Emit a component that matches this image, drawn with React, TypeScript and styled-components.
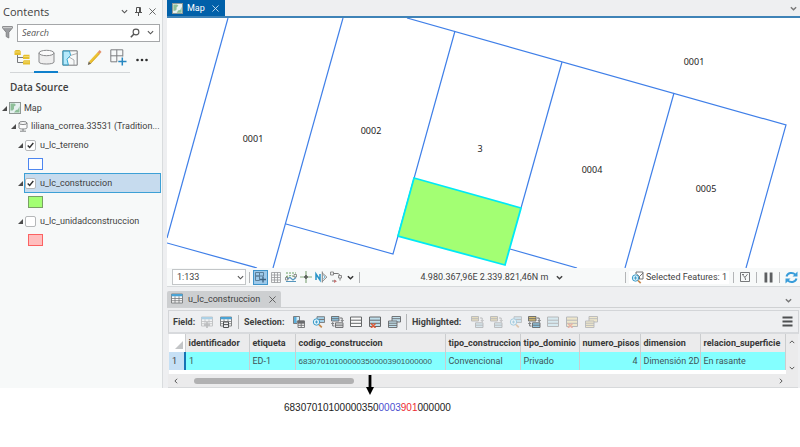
import React from "react";
import styled, { createGlobalStyle, css } from "styled-components";

const GlobalStyle = createGlobalStyle`
  *, *::before, *::after { box-sizing: border-box; }
  body {
    margin: 0;
    background: #ffffff;
    color: #3f3f3f;
    font-family: Roboto, "Noto Sans", sans-serif;
    font-size: 9px;
    line-height: 12px;
  }
  button, input, select { font: inherit; color: inherit; margin: 0; }
  svg { display: block; flex: none; }
`;

/* ---------- layout ---------- */

const Page = styled.div`
  display: flex;
  flex-direction: column;
  min-height: 100vh;
  background: #ffffff;
`;

const Workspace = styled.div`
  display: grid;
  grid-template-columns: 163px minmax(0, 1fr);
  column-gap: 4px;
  background: #eeeff1;
`;

const Sidebar = styled.aside`
  display: flex;
  flex-direction: column;
  min-width: 0;
  background: #f7f9f9;
  border-right: 1px solid #d9dcde;
`;

const Main = styled.main`
  display: flex;
  flex-direction: column;
  min-width: 0;
`;

const IconButton = styled.button<{ $w?: number; $h?: number; $faded?: boolean; $active?: boolean }>`
  display: flex;
  flex: none;
  align-items: center;
  justify-content: center;
  width: ${(p) => p.$w ?? 14}px;
  height: ${(p) => p.$h ?? 14}px;
  padding: 0;
  border: 1px solid ${(p) => (p.$active ? "#3f93c9" : "transparent")};
  background: ${(p) => (p.$active ? "#9cc9ea" : "transparent")};
  opacity: ${(p) => (p.$faded ? 0.4 : 1)};
`;

/* ---------- contents pane ---------- */

const PaneHeader = styled.header`
  display: flex;
  align-items: center;
  height: 23px;
  padding: 0 3px 0 3px;
`;

const PaneTitle = styled.h2`
  flex: 1;
  margin: 0;
  font-family: "Open Sans", "Noto Sans", sans-serif;
  font-size: 11px;
  font-weight: 400;
`;

const SearchRow = styled.div`
  display: flex;
  align-items: center;
  gap: 3px;
  height: 19px;
  padding: 0 2px 0 1px;
`;

const SearchBox = styled.div`
  display: flex;
  flex: 1;
  align-items: center;
  min-width: 0;
  height: 18px;
  padding-left: 4px;
  background: #ffffff;
  border: 1px solid #a5a7a9;
`;

const SearchInput = styled.input`
  flex: 1;
  min-width: 0;
  padding: 0;
  border: 0;
  outline: 0;
  background: transparent;
  font-family: "Open Sans", "Noto Sans", sans-serif;
  &::placeholder { color: #555; font-style: italic; opacity: 1; }
`;

const ViewTabs = styled.nav`
  display: flex;
  align-items: stretch;
  height: 31px;
  padding-left: 10px;
`;

const ViewTab = styled.button<{ $active?: boolean; $line?: boolean }>`
  display: flex;
  align-items: center;
  justify-content: center;
  width: 24px;
  padding: 0;
  border: 0;
  background: transparent;
  box-shadow: inset 0 ${(p) => (p.$active ? "-2px #0f80cc" : p.$line === false ? "0 transparent" : "-1px #d3d6d8")};
`;

const MoreTab = styled(ViewTab)`
  padding-top: 4px;
`;

const SectionTitle = styled.h3`
  margin: 0;
  padding: 7px 0 4px 10px;
  font-family: "Open Sans", "Noto Sans", sans-serif;
  font-size: 10px;
  font-weight: 600;
  line-height: 15px;
`;

const Tree = styled.ul`
  margin: 0;
  padding: 0 1px 0 0;
  list-style: none;
`;

const TreeRow = styled.li<{ $level: number; $tall?: boolean }>`
  display: flex;
  align-items: center;
  height: ${(p) => (p.$tall ? 20 : 18)}px;
  padding-left: ${(p) => p.$level * 8}px;
  white-space: nowrap;
`;

const TreeName = styled.span`
  padding-left: 3px;
`;

const LayerLabel = styled.label<{ $selected?: boolean }>`
  display: flex;
  flex: 1;
  align-items: center;
  height: 20px;
  gap: 4px;
  border: 1px solid transparent;
  ${(p) =>
    p.$selected &&
    css`
      border-color: #3da0d6;
      background: #c6dbee;
    `}
`;

const CheckWrap = styled.span`
  display: grid;
  flex: none;
  & > * { grid-area: 1 / 1; place-self: center; }
  & > svg { visibility: hidden; pointer-events: none; }
  & > input:checked + svg { visibility: visible; }
`;

const CheckInput = styled.input`
  appearance: none;
  width: 11px;
  height: 11px;
  border: 1px solid #b5b7b9;
  border-radius: 2px;
  background: #ffffff;
`;

const Swatch = styled.span<{ $fill: string; $stroke: string }>`
  width: 15px;
  height: 12px;
  margin-left: 4px;
  background: ${(p) => p.$fill};
  border: 1px solid ${(p) => p.$stroke};
`;

/* ---------- map pane ---------- */

const MapTabs = styled.div`
  display: flex;
  align-items: stretch;
  justify-content: space-between;
  height: 18px;
  padding-right: 2px;
  border-bottom: 2px solid #3f83b7;
`;

const MapTab = styled.div`
  display: flex;
  align-items: center;
  gap: 4px;
  padding: 0 2px 0 5px;
  background: #0060a9;
  color: #ffffff;
`;

const MapCanvas = styled.svg`
  width: 100%;
  height: 250px;
  background: #ffffff;
  font-family: "Noto Sans", sans-serif;
  font-size: 9px;
  fill: #1d1d1d;
`;

const StatusBar = styled.div`
  display: flex;
  align-items: center;
  height: 19px;
  padding: 0 2px 0 5px;
  background: #f7f9f9;
  border-bottom: 1px solid #d7dadc;
`;

const ScaleBox = styled.div`
  display: grid;
  align-items: center;
  width: 74px;
  background: #ffffff;
  & > * { grid-area: 1 / 1; }
  & > svg { justify-self: end; margin-right: 2px; pointer-events: none; }
`;

const ScaleSelect = styled.select`
  appearance: none;
  width: 100%;
  height: 16px;
  padding: 0 4px;
  border: 1px solid #c3c6c8;
  border-radius: 0;
  background: transparent;
`;

const Divider = styled.span<{ $gap?: number; $h?: number }>`
  flex: none;
  width: 1px;
  height: ${(p) => p.$h ?? 11}px;
  margin: 0 ${(p) => p.$gap ?? 4}px;
  background: #b3b5b7;
`;

const Tools = styled.div`
  display: flex;
  align-items: center;
  gap: 1px;
`;

const Coordinates = styled.div`
  display: flex;
  flex: 1;
  align-items: center;
  justify-content: center;
  gap: 8px;
  white-space: nowrap;
`;

const Selected = styled.div`
  display: flex;
  align-items: center;
  gap: 2px;
  padding: 0 2px;
  background: #ffffff;
  white-space: nowrap;
`;

/* ---------- table pane ---------- */

const TableTabs = styled.div`
  display: flex;
  align-items: flex-end;
  justify-content: space-between;
  height: 21px;
  padding-right: 3px;
  border-bottom: 1px solid #cfd1d3;
`;

const TableTab = styled.div`
  display: flex;
  align-items: center;
  gap: 5px;
  height: 16px;
  padding: 0 2px 0 4px;
  border-radius: 2px 2px 0 0;
  background: #cdcfd1;
`;

const TableToolbar = styled.div`
  display: flex;
  align-items: center;
  height: 24px;
  margin: 2px 1px 0 1px;
  padding: 0 5px 0 4px;
  border: 1px solid #d3d5d8;
  border-bottom: 2px solid #d8dadd;
`;

const ToolLabel = styled.span<{ $w: number }>`
  width: ${(p) => p.$w}px;
  font-weight: 700;
`;

const ToolGroup = styled.div`
  display: flex;
  align-items: center;
  gap: 5px;
`;

const Spacer = styled.span`
  flex: 1;
`;

const TableArea = styled.div`
  display: grid;
  grid-template-columns: minmax(0, 1fr) 12px;
  margin: 0 2px 0 2px;
  background: #ebebec;
`;

const TableView = styled.div`
  overflow: hidden;
  padding-bottom: 4px;
  background: #ffffff;
`;

const Grid = styled.table`
  width: 100%;
  border-collapse: collapse;
  table-layout: fixed;
  th, td {
    height: 18px;
    padding: 0 2px 0 3px;
    border-right: 1px solid #cbcdcf;
    text-align: left;
    white-space: nowrap;
    line-height: 12px;
  }
  thead th { background: #ebebec; font-weight: 700; color: #383838; }
  tbody td { background: #84ffff; color: #3f5558; }
`;

const CornerCell = styled.td`
  && { background: #ffffff; padding: 3px 0 0 6px; }
`;

const RowHeader = styled.th`
  && {
    padding: 0 4px 0 3px;
    border-right: 2px solid #1673b5;
    background: #c6e0f5;
    font-weight: 400;
  }
`;

const Code = styled.span`
  font-family: "Liberation Sans", Arial, sans-serif;
  font-size: 8px;
`;

const NumberCell = styled.td`
  && { text-align: right; }
`;

const VerticalScroll = styled.div`
  display: flex;
  flex-direction: column;
  align-items: center;
  justify-content: space-between;
  padding: 5px 0 3px;
`;

const HorizontalScroll = styled.div`
  position: relative;
  display: flex;
  align-items: center;
  height: 14px;
  margin: 0 2px 0 1px;
  padding: 0 14px 0 5px;
  background: #ebebec;
  border-bottom: 1px solid #d7d9db;
`;

const ScrollTrack = styled.div`
  flex: 1;
  padding: 0 14px 0 15px;
`;

const ScrollThumb = styled.div`
  width: 28%;
  height: 6px;
  border-radius: 3px;
  background: #b1b1b2;
`;

const CalloutArrow = styled.svg`
  position: absolute;
  top: 1px;
  left: 198px;
`;

const Caption = styled.p`
  margin: 0;
  padding: 12px 0 12px 284px;
  color: #222222;
  font-family: "Liberation Sans", Arial, sans-serif;
  font-size: 10px;
  line-height: 16px;
`;

const Digits = styled.span<{ $color: string }>`
  color: ${(p) => p.$color};
`;

/* ---------- icons ---------- */

const Chevron = ({ dir = "down", size = 7, color = "#555", w = 1.3 }: { dir?: string; size?: number; color?: string; w?: number }) => {
  const d: Record<string, string> = {
    down: "M1 2.5 4 5.5 7 2.5",
    up: "M1 5.5 4 2.5 7 5.5",
    left: "M5.5 1 2.5 4 5.5 7",
    right: "M2.5 1 5.5 4 2.5 7",
  };
  return (
    <svg width={size} height={size} viewBox="0 0 8 8" fill="none" stroke={color} strokeWidth={w}>
      <path d={d[dir]} />
    </svg>
  );
};

const Cross = ({ size = 8, color = "#555" }: { size?: number; color?: string }) => (
  <svg width={size} height={size} viewBox="0 0 8 8" fill="none" stroke={color}>
    <path d="M.5 .5 7.5 7.5M7.5 .5 .5 7.5" />
  </svg>
);

const Pin = () => (
  <svg width="7" height="9" viewBox="0 0 7 9" fill="none" stroke="#555">
    <path d="M1.5 5.5V.5H5.5V5.5M0 5.5H7M3.5 5.5V9M4.5 1V5" />
  </svg>
);

const Funnel = () => (
  <svg width="11" height="13" viewBox="0 0 11 13">
    <path d="M.6 .6H10.4V2L6.8 6.4V12L4.2 10.6V6.4L.6 2Z" fill="#9b9da0" stroke="#77797b" strokeWidth=".8" />
    <path d="M1 1.6H10" stroke="#dcdddd" strokeWidth=".8" />
  </svg>
);

const Magnifier = () => (
  <svg width="10" height="10" viewBox="0 0 10 10" fill="none" stroke="#555">
    <circle cx="6" cy="4" r="2.9" strokeWidth="1.1" />
    <path d="M4 6 .8 9.2" strokeWidth="1.6" />
  </svg>
);

const DrawOrder = () => (
  <svg width="17" height="17" viewBox="0 0 17 17">
    <path d="M3.5 6V13.5H9M3.5 8.5H9" fill="none" stroke="#77797b" />
    <path d="M.5 2.3 1.8 1H5.5L6.8 2.3V6H.5Z M9 6.8 10 5.8H15.5V10H9Z M9 12.2 10 11.2H16V15.5H9Z" fill="#e6c02d" />
    <path d="M1 3H6.5M9.5 7.5H15M9.5 13H15.5" stroke="#f4df83" strokeWidth=".8" />
  </svg>
);

const Cylinder = () => (
  <svg width="17" height="17" viewBox="0 0 17 17" fill="#eeeeee" stroke="#88898b">
    <path d="M1 4V13C1 15.7 16 15.7 16 13V4" />
    <ellipse cx="8.5" cy="4" rx="7.5" ry="2.7" fill="#fafafa" />
  </svg>
);

const SelectionTab = () => (
  <svg width="16" height="16" viewBox="0 0 16 16">
    <path d="M1 1H7.5L8.6 5.4 5 9.2 6.4 15H1Z" fill="#b5e9fb" />
    <path d="M.8 .8H15.2V15.2H.8Z" fill="none" stroke="#77797b" />
    <path d="M1 1H7.5L8.6 5.4 5 9.2 6.4 15H1Z" fill="none" stroke="#35a6cf" />
    <path d="M8.6 5.4 15 3.5M7 7 12 10V15" fill="none" stroke="#9a9c9e" strokeWidth=".8" />
  </svg>
);

const Pencil = () => (
  <svg width="15" height="16" viewBox="0 0 15 16">
    <path d="M3 12.5 11.8 3" stroke="#edc233" strokeWidth="2.6" />
    <path d="M11.5 3.2 13.6 1" stroke="#e3906a" strokeWidth="2.6" />
    <path d="M.8 15 1.7 11.5 4.2 13.8Z" fill="#6d6248" />
    <path d="M3.5 13.4 12.7 3.6" stroke="#c79a1c" strokeWidth=".6" />
  </svg>
);

const GridPlus = ({ size = 17, line = "#7c7e80" }: { size?: number; line?: string }) => (
  <svg width={size} height={size} viewBox="0 0 17 17" fill="none">
    <path d="M.8 .8H12.8V7.5M7 12.8H.8V.8M6.8 .8V12.8M.8 6.8H12.8" stroke={line} />
    <path d="M12.3 8.5V16.5M8.3 12.5H16.5" stroke="#2787c1" strokeWidth="1.5" />
  </svg>
);

const SnapGrid = () => (
  <svg width="13" height="13" viewBox="0 0 13 13" fill="none">
    <path d="M1.5 1.5H5.5V5H1.5ZM5.5 1.5H9.5V5H5.5ZM1.5 5H5.5V9.5H1.5Z" stroke="#5b7f99" />
    <path d="M9 5.5V11.5M6 8.5H12" stroke="#3c6280" strokeWidth="1.3" />
  </svg>
);

const Dots = () => (
  <svg width="12" height="4" viewBox="0 0 12 4" fill="#2f2f2f">
    <circle cx="1.5" cy="2" r="1.3" />
    <circle cx="6" cy="2" r="1.3" />
    <circle cx="10.5" cy="2" r="1.3" />
  </svg>
);

const Triangle = () => (
  <svg width="5" height="5" viewBox="0 0 5 5">
    <path d="M5 0V5H0Z" fill="#4c4c4c" />
  </svg>
);

const MapThumb = ({ size = 12 }: { size?: number }) => (
  <svg width={size} height={size} viewBox="0 0 12 12">
    <rect x=".5" y=".5" width="11" height="11" fill="#e6f1f0" stroke="#8f9894" />
    <path d="M1.5 1.5H5.5L7 3 5 4.5V7L3.5 8.5H1.5Z" fill="#8dbf98" />
    <path d="M10.5 4V10.5H5L7 8 9 7.5Z" fill="#8dbf98" />
  </svg>
);

const Database = () => (
  <svg width="10" height="11" viewBox="0 0 10 11" fill="#fbfbfb" stroke="#77797b" strokeWidth=".9">
    <path d="M1 2V6.8C1 8.4 9 8.4 9 6.8V2" />
    <ellipse cx="5" cy="2" rx="4" ry="1.5" />
    <path d="M5 8V10M2 10.2H8" />
  </svg>
);

const CheckMark = () => (
  <svg width="7" height="7" viewBox="0 0 7 7" fill="none" stroke="#333" strokeWidth="1.4">
    <path d="M.7 3.4 2.7 5.5 6.3 1" />
  </svg>
);

const MeshGrid = () => (
  <svg width="10" height="11" viewBox="0 0 10 11" stroke="#96989a" strokeWidth=".8" fill="none">
    <path d="M.5 .5H9.5V10.5H.5ZM3.5 .5V10.5M6.5 .5V10.5M.5 3H9.5M.5 5.5H9.5M.5 8H9.5" />
  </svg>
);

const Snapping = () => (
  <svg width="12" height="12" viewBox="0 0 12 12" fill="none">
    <path d="M1 2H11M1 5.5 6 4.5 10.5 6" stroke="#6a9f62" strokeDasharray="2 1" />
    <path d="M1 10.5H11M2 8 5 6.5 8 9 11 6.5" stroke="#5596bd" strokeWidth="1.1" />
    <path d="M.5 6.5H3V9H.5ZM9 3.5H11.5V6H9Z" stroke="#777" strokeWidth=".8" />
  </svg>
);

const Crosshair = () => (
  <svg width="12" height="12" viewBox="0 0 12 12" fill="none">
    <path d="M6 0V12M0 6H12" stroke="#88aa80" strokeWidth="1.2" />
    <path d="M4 6H8M6 4V8" stroke="#5a5c5a" strokeWidth="1.6" />
  </svg>
);

const NorthMark = () => (
  <svg width="13" height="12" viewBox="0 0 13 12" fill="none">
    <path d="M1 9V3L5 9V3" stroke="#2993c8" strokeWidth="1.5" />
    <path d="M7.3 .5V11.5M7.3 2 11.8 6 7.3 10.5" stroke="#777" strokeWidth=".9" />
    <path d="M8.3 4.4 10 6 8.3 7.8" stroke="#53a7d0" strokeWidth=".8" />
  </svg>
);

const Feedback = () => (
  <svg width="12" height="12" viewBox="0 0 12 12" fill="none">
    <path d="M2 2.5H7C11 2.5 10 6.5 10 9.5M2 10H6" stroke="#777" />
    <path d="M.5 1H3.5V4H.5ZM8.5 4.5H11.5V7H8.5Z" fill="#eee" stroke="#777" strokeWidth=".8" />
    <path d="M4 8.5 7 10.2 4 12Z" fill="#c77878" />
  </svg>
);

const ZoomSelected = () => (
  <svg width="13" height="13" viewBox="0 0 13 13" fill="none">
    <path d="M5 1H12V8H8M5 1V3M5.5 3 8.5 5.5 12 2M8.5 5.5V8" stroke="#666" strokeWidth=".9" />
    <circle cx="4.5" cy="7" r="3.2" fill="#d9f1fb" stroke="#3d9bc8" />
    <path d="M4.5 5.3V8.7M2.8 7H6.2" stroke="#3d9bc8" strokeWidth=".9" />
    <path d="M7 9.5 9.7 12.2" stroke="#c6884c" strokeWidth="1.7" />
  </svg>
);

const Extent = () => (
  <svg width="10" height="10" viewBox="0 0 10 10" fill="none" stroke="#686a6c" strokeWidth=".9">
    <path d="M.5 .5H9.5V9.5H.5ZM2.5 3 5 5.3 7.5 2.2M5 5.3 5.6 8M2 2.5H4" />
  </svg>
);

const Pause = () => (
  <svg width="9" height="11" viewBox="0 0 9 11" fill="#5d5f61">
    <path d="M.5 .5H3.3V10.5H.5ZM5.7 .5H8.5V10.5H5.7Z" />
  </svg>
);

const Refresh = () => (
  <svg width="13" height="13" viewBox="0 0 13 13" fill="none">
    <path d="M1.5 5.5C2.5 1.8 7.5 .6 10.3 3.6M11.5 7.5C10.5 11.2 5.5 12.4 2.7 9.4" stroke="#399dda" strokeWidth="2" />
    <path d="M12.5 .5V5.5H7.5ZM.5 12.5V7.5H5.5Z" fill="#399dda" />
  </svg>
);

const TableGlyph = ({ plus, gear }: { plus?: boolean; gear?: boolean }) => (
  <svg width="12" height="12" viewBox="0 0 12 12" fill="none">
    <path d="M.5 1H11.5V10H.5Z" fill="#fafafa" stroke="#77797b" strokeWidth=".9" />
    <path d="M.5 1H11.5V3.3H.5Z" fill="#4aa3d5" />
    <path d="M.5 5.5H11.5M.5 7.7H11.5M4 3.3V10M8 3.3V10" stroke="#77797b" strokeWidth=".8" />
    {plus && <path d="M6 6V12M3 9H9" stroke="#6d6f71" strokeWidth="1.6" />}
    {gear && <path d="M3.5 6H8.5V11.5H3.5Z M3.5 8.6H8.5" fill="#eeeff1" stroke="#4e5052" />}
  </svg>
);

const SelectByAttr = () => (
  <svg width="12" height="12" viewBox="0 0 12 12" fill="none" stroke="#6f7173" strokeWidth=".9">
    <path d="M.5 .5H6.5V5H4V7.5H.5Z" fill="#d6eefa" />
    <path d="M1 1H3.5V7H1Z" fill="#5aaedb" stroke="none" />
    <path d="M5 5H11.5V11.5H5Z" fill="#f5f5f5" />
    <path d="M5 5H11.5V7.2H5Z" fill="#67696b" />
    <path d="M5 9.3H11.5M8.2 7V11.5" />
  </svg>
);

const ZoomRows = () => (
  <svg width="13" height="12" viewBox="0 0 13 12" fill="none">
    <path d="M5 .7H12.5V6.5H5Z" fill="#a2cfe7" stroke="#77797b" strokeWidth=".9" />
    <path d="M5 3.5H12.5" stroke="#77797b" />
    <circle cx="4.5" cy="6" r="3.2" fill="#e2f4fc" stroke="#3d9bc8" />
    <path d="M4.5 4.5V7.5M3 6H6" stroke="#3d9bc8" strokeWidth=".9" />
    <path d="M7 8.6 9.8 11.4" stroke="#c6884c" strokeWidth="1.6" />
  </svg>
);

const SwitchRows = ({ top = "#8fc6e2", bottom = "#d5d6d7" }: { top?: string; bottom?: string }) => (
  <svg width="13" height="12" viewBox="0 0 13 12" fill="none" stroke="#66686a" strokeWidth=".9">
    <path d="M.5 .5H8V5H.5Z" fill={top} />
    <path d="M.5 2.7H8" />
    <path d="M4.5 6.8H12V11.5H4.5Z" fill={bottom} />
    <path d="M4.5 9.2H12M9 2H11.2V5.5M9.8 4 11.2 5.6 12.6 4M3.5 10H1.7V6.8M.3 8 1.7 6.5 3.1 8" />
  </svg>
);

const MoveRows = () => (
  <svg width="13" height="12" viewBox="0 0 13 12" fill="none" stroke="#66686a" strokeWidth=".9">
    <path d="M.5 .5H7.5V5H.5Z" fill="#d8bf73" />
    <path d="M.5 2.7H7.5" />
    <path d="M4.5 6.8H12V11.5H4.5Z" fill="#b5d9e8" />
    <path d="M4.5 9.2H12M9 2H11.2V5.5M9.8 4 11.2 5.6 12.6 4" />
  </svg>
);

const Rows = ({ fill = "#fafafa", remove = false }: { fill?: string; remove?: boolean }) => (
  <svg width="12" height="12" viewBox="0 0 12 12" fill="none">
    <path d="M.5 1H11.5V10.5H.5Z" fill={fill} stroke="#66686a" />
    <path d="M.5 4.2H11.5M.5 7.3H11.5" stroke="#66686a" />
    {remove && <path d="M2 7.5 6.5 12M6.5 7.5 2 12" stroke="#df5a37" strokeWidth="1.5" />}
  </svg>
);

const CopyRows = ({ fill = "#c3e1ee" }: { fill?: string }) => (
  <svg width="13" height="12" viewBox="0 0 13 12" stroke="#66686a" strokeWidth=".9">
    <path d="M4 .5H12.5V6H4Z" fill={fill} />
    <path d="M4 2.7H12.5" />
    <path d="M.5 5H9V11.5H.5Z" fill={fill} />
    <path d="M.5 7.2H9M.5 9.4H9" />
  </svg>
);

const Menu = () => (
  <svg width="11" height="11" viewBox="0 0 11 11" stroke="#4e5052" strokeWidth="2">
    <path d="M.5 1.5H10.5M.5 5.5H10.5M.5 9.5H10.5" />
  </svg>
);

/* ---------- data ---------- */

const layers = [
  { name: "u_lc_terreno", on: true, selected: false, fill: "#fcfdff", stroke: "#4d86f0" },
  { name: "u_lc_construccion", on: true, selected: true, fill: "#a3ff73", stroke: "#79a065" },
  { name: "u_lc_unidadconstruccion", on: false, selected: false, fill: "#ffbebe", stroke: "#fb6262" },
];

const parcelLines = [
  "M228 18 167 238",
  "M167 243 257 268",
  "M343 18 273 268",
  "M286 224 393 254 455 31",
  "M407 18 786 125 746 268",
  "M562 62 521 208",
  "M674 93 625 268",
  "M510 249 577 268",
];

const parcelLabels: [string, number, number][] = [
  ["0001", 253, 142],
  ["0002", 371, 134],
  ["3", 480, 152],
  ["0004", 592, 173],
  ["0005", 706, 192],
  ["0001", 694, 65],
];

const columns: [string, number | undefined][] = [
  ["identificador", 64],
  ["etiqueta", 46],
  ["codigo_construccion", 150],
  ["tipo_construccion", 75],
  ["tipo_dominio", 59],
  ["numero_pisos", 61],
  ["dimension", 60],
  ["relacion_superficie", undefined],
];

/* ---------- sections ---------- */

const ContentsPane = () => (
  <Sidebar>
    <PaneHeader>
      <PaneTitle>Contents</PaneTitle>
      <IconButton aria-label="Pane options"><Chevron /></IconButton>
      <IconButton aria-label="Pin"><Pin /></IconButton>
      <IconButton aria-label="Close pane"><Cross size={7} /></IconButton>
    </PaneHeader>
    <SearchRow>
      <IconButton $w={13} aria-label="Filter"><Funnel /></IconButton>
      <SearchBox>
        <SearchInput type="text" placeholder="Search" aria-label="Search" />
        <IconButton aria-label="Run search"><Magnifier /></IconButton>
        <IconButton $w={17} aria-label="Search options"><Chevron /></IconButton>
      </SearchBox>
    </SearchRow>
    <ViewTabs>
      <ViewTab aria-label="Drawing order"><DrawOrder /></ViewTab>
      <ViewTab $active aria-label="Data source"><Cylinder /></ViewTab>
      <ViewTab aria-label="Selection"><SelectionTab /></ViewTab>
      <ViewTab aria-label="Editing"><Pencil /></ViewTab>
      <ViewTab aria-label="Snapping"><GridPlus /></ViewTab>
      <MoreTab $line={false} aria-label="More"><Dots /></MoreTab>
    </ViewTabs>
    <SectionTitle>Data Source</SectionTitle>
    <Tree>
      <TreeRow $level={0}>
        <IconButton $w={9} aria-label="Collapse"><Triangle /></IconButton>
        <MapThumb />
        <TreeName>Map</TreeName>
      </TreeRow>
      <TreeRow $level={1}>
        <IconButton $w={10} aria-label="Collapse"><Triangle /></IconButton>
        <Database />
        <TreeName>liliana_correa.33531 (Tradition...</TreeName>
      </TreeRow>
      {layers.map((l) => (
        <React.Fragment key={l.name}>
          <TreeRow $level={2} $tall>
            <IconButton $w={8} aria-label="Collapse"><Triangle /></IconButton>
            <LayerLabel $selected={l.selected}>
              <CheckWrap>
                <CheckInput type="checkbox" defaultChecked={l.on} />
                <CheckMark />
              </CheckWrap>
              {l.name}
            </LayerLabel>
          </TreeRow>
          <TreeRow $level={3}>
            <Swatch $fill={l.fill} $stroke={l.stroke} />
          </TreeRow>
        </React.Fragment>
      ))}
    </Tree>
  </Sidebar>
);

const MapPane = () => (
  <section>
    <MapTabs>
      <MapTab>
        <MapThumb size={11} />
        Map
        <IconButton aria-label="Close map"><Cross color="#cfe3f1" size={7} /></IconButton>
      </MapTab>
      <IconButton $w={9} $h={16} aria-label="Map list"><Chevron color="#777" w={1.6} /></IconButton>
    </MapTabs>
    <MapCanvas viewBox="167 18 633 250" preserveAspectRatio="xMinYMin slice">
      <g fill="none" stroke="#3f7fe8" strokeWidth="1.2">
        {parcelLines.map((d) => <path key={d} d={d} />)}
      </g>
      <path d="M414 178 521 208 505 265 398 236Z" fill="#a3ff73" stroke="#00e9f5" strokeWidth="1.8" />
      <g textAnchor="middle">
        {parcelLabels.map(([t, x, y]) => <text key={t + x} x={x} y={y}>{t}</text>)}
      </g>
    </MapCanvas>
    <StatusBar>
      <ScaleBox>
        <ScaleSelect aria-label="Map scale" defaultValue="1:133">
          <option>1:133</option>
        </ScaleSelect>
        <Chevron />
      </ScaleBox>
      <Divider $gap={3} />
      <Tools>
        <IconButton $w={15} $h={15} $active aria-label="Snapping"><SnapGrid /></IconButton>
        <IconButton aria-label="Grid"><MeshGrid /></IconButton>
        <IconButton aria-label="Constraints"><Snapping /></IconButton>
        <IconButton aria-label="Inference"><Crosshair /></IconButton>
        <IconButton aria-label="Ground to grid"><NorthMark /></IconButton>
        <IconButton aria-label="Topology"><Feedback /></IconButton>
        <IconButton $w={13} aria-label="More tools"><Chevron color="#333" w={1.7} /></IconButton>
      </Tools>
      <Divider $gap={2} />
      <Coordinates>
        4.980.367,96E 2.339.821,46N m
        <Chevron color="#444" w={1.7} />
      </Coordinates>
      <Divider $gap={3} />
      <Selected>
        <ZoomSelected />
        Selected Features: 1
      </Selected>
      <Divider />
      <IconButton aria-label="Extent"><Extent /></IconButton>
      <Divider />
      <IconButton aria-label="Pause drawing"><Pause /></IconButton>
      <Divider />
      <IconButton aria-label="Refresh"><Refresh /></IconButton>
    </StatusBar>
  </section>
);

const TablePane = () => (
  <section>
    <TableTabs>
      <TableTab>
        <TableGlyph />
        u_lc_construccion
        <IconButton aria-label="Close table"><Cross size={7} /></IconButton>
      </TableTab>
      <IconButton $w={18} aria-label="Table list"><Chevron color="#777" w={1.6} /></IconButton>
    </TableTabs>
    <TableToolbar>
      <ToolLabel $w={27}>Field:</ToolLabel>
      <ToolGroup>
        <IconButton $faded aria-label="Add field"><TableGlyph plus /></IconButton>
        <IconButton aria-label="Calculate field"><TableGlyph gear /></IconButton>
      </ToolGroup>
      <Divider $gap={5} $h={14} />
      <ToolLabel $w={48}>Selection:</ToolLabel>
      <ToolGroup>
        <IconButton aria-label="Select by attributes"><SelectByAttr /></IconButton>
        <IconButton aria-label="Zoom to selection"><ZoomRows /></IconButton>
        <IconButton aria-label="Switch selection"><SwitchRows /></IconButton>
        <IconButton aria-label="Select all"><Rows /></IconButton>
        <IconButton aria-label="Clear selection"><Rows fill="#c0dfec" remove /></IconButton>
        <IconButton aria-label="Copy selection"><CopyRows /></IconButton>
      </ToolGroup>
      <Divider $gap={5} $h={16} />
      <ToolLabel $w={58}>Highlighted:</ToolLabel>
      <ToolGroup>
        <IconButton $faded aria-label="Select highlighted"><MoveRows /></IconButton>
        <IconButton $faded aria-label="Unselect highlighted"><MoveRows /></IconButton>
        <IconButton $faded aria-label="Zoom to highlighted"><ZoomRows /></IconButton>
        <IconButton aria-label="Switch highlighted"><SwitchRows top="#d8bf73" bottom="#8fc6e2" /></IconButton>
        <IconButton $faded aria-label="Highlight all"><Rows fill="#b5e2ef" /></IconButton>
        <IconButton $faded aria-label="Delete highlighted"><Rows fill="#f2dc94" remove /></IconButton>
        <IconButton $faded aria-label="Copy highlighted"><CopyRows fill="#f2dc94" /></IconButton>
      </ToolGroup>
      <Spacer />
      <IconButton $w={11} aria-label="Table menu"><Menu /></IconButton>
    </TableToolbar>
    <TableArea>
      <TableView>
        <Grid>
          <colgroup>
            <col width={16} />
            {columns.map(([name, w]) => <col key={name} width={w} />)}
          </colgroup>
          <thead>
            <tr>
              <CornerCell>
                <svg width="8" height="8" viewBox="0 0 8 8"><path d="M8 0V8H0Z" fill="#c3c5c7" /></svg>
              </CornerCell>
              {columns.map(([name]) => <th key={name} scope="col">{name}</th>)}
            </tr>
          </thead>
          <tbody>
            <tr>
              <RowHeader scope="row">1</RowHeader>
              <td>1</td>
              <td>ED-1</td>
              <td><Code>683070101000003500003901000000</Code></td>
              <td>Convencional</td>
              <td>Privado</td>
              <NumberCell>4</NumberCell>
              <td>Dimensión 2D</td>
              <td>En rasante</td>
            </tr>
          </tbody>
        </Grid>
      </TableView>
      <VerticalScroll>
        <Chevron dir="up" size={6} />
        <Chevron dir="down" size={6} />
      </VerticalScroll>
    </TableArea>
    <HorizontalScroll>
      <Chevron dir="left" size={6} />
      <ScrollTrack><ScrollThumb /></ScrollTrack>
      <Chevron dir="right" size={6} />
      <CalloutArrow width="8" height="20" viewBox="0 0 8 20">
        <path d="M2.6 0H5.4V12H8L4 20 0 12H2.6Z" fill="#000" />
      </CalloutArrow>
    </HorizontalScroll>
  </section>
);

export default function App() {
  return (
    <>
      <GlobalStyle />
      <Page>
        <Workspace>
          <ContentsPane />
          <Main>
            <MapPane />
            <TablePane />
          </Main>
        </Workspace>
        <Caption>
          68307010100000350<Digits $color="#4a4fd0">0003</Digits><Digits $color="#ee2b33">901</Digits>000000
        </Caption>
      </Page>
    </>
  );
}
